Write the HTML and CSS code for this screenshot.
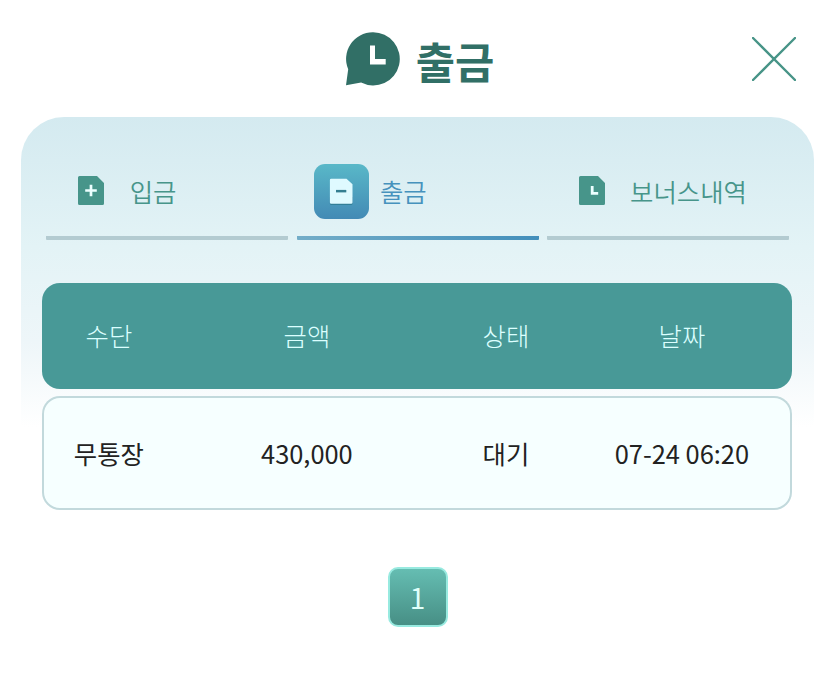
FILE: index.html
```html
<!DOCTYPE html>
<html lang="ko">
<head>
<meta charset="utf-8">
<title>출금</title>
<link rel="stylesheet" href="styles.css">
</head>
<body>
<header class="header">
  <div class="title">
    <svg class="title-icon" viewBox="0 0 54 54" aria-hidden="true"><path fill="#316f66" d="M26.800.3a26.600 26.600 0 1 1-11.700 50.300L0 53.200 2.200 37.300A26.600 26.600 0 0 1 26.800.3z"/><path fill="#fff" d="M24 13.500h5V27h10.700v5.500H24z"/></svg>
    <h1>출금</h1>
  </div>
  <button class="close" aria-label="닫기"><svg viewBox="0 0 44 44"><path d="M1 1l42 42M43 1L1 43" fill="none" stroke="#479487" stroke-width="2.4" stroke-linecap="round"/></svg></button>
</header>
<main class="panel">
  <nav class="tabs">
    <a class="tab"><span class="badge"><svg viewBox="0 0 26 29"><path fill="#47958a" d="M1.500 0H19l7 7v20.500a1.500 1.500 0 0 1-1.500 1.500h-23A1.500 1.500 0 0 1 0 27.500v-26A1.500 1.500 0 0 1 1.500 0z"/><path d="M13 8.700v11.600M7.200 14.500h11.600" fill="none" stroke="#ecffff" stroke-width="2.700"/></svg></span><span>입금</span></a>
    <a class="tab active"><span class="badge"><svg viewBox="0 0 26 29"><path fill="#327f98" d="M1.900 20h22.600v6.600q0 1.500-1.500 1.500H3.400q-1.500 0-1.500-1.500z"/><path fill="#dffaff" d="M3.200 1.800h15.300l6 5.500v18.200q0 1.300-1.300 1.300h-20q-1.300 0-1.300-1.300V3.100q0-1.300 1.300-1.300z"/><path fill="#347e91" d="M8 12.900h10.300v2.500H8z"/></svg></span><span>출금</span></a>
    <a class="tab"><span class="badge"><svg viewBox="0 0 26 29"><path fill="#47958a" d="M1.500 0H19l7 7v20.500a1.500 1.500 0 0 1-1.500 1.500h-23A1.500 1.500 0 0 1 0 27.500v-26A1.500 1.500 0 0 1 1.500 0z"/><path fill="#ecffff" d="M11.800 10h2.800v5.900h4.600v2.800h-7.400z"/></svg></span><span>보너스내역</span></a>
  </nav>
  <section class="table">
    <div class="row head"><span>수단</span><span>금액</span><span>상태</span><span>날짜</span></div>
    <div class="row entry"><span>무통장</span><span>430,000</span><span>대기</span><span class="date" lang="ja">07-24 06:20</span></div>
  </section>
  <div class="pager"><button class="page">1</button></div>
</main>
</body>
</html>
```
FILE: styles.css
```css
* { box-sizing: border-box; }
body {
  margin: 0;
  background: #fff;
  font-family: "Noto Sans CJK KR", "Noto Sans", sans-serif;
  font-size: 25.4px;
}
button { font: inherit; padding: 0; border: 0; background: none; }
.header {
  display: grid;
  grid-template-columns: 1fr auto 1fr;
  align-items: center;
  height: 117px;
  padding: 0 39px 0 44px;
}
.title { grid-column: 2; display: flex; align-items: center; gap: 16px; }
.title-icon { width: 54px; height: 54px; }
h1 { margin: 2px 0 0; color: #316f66; font-size: 42.7px; font-weight: 700; line-height: 60px; }
.close { justify-self: end; width: 44px; height: 44px; }
.close svg, .badge svg { display: block; }
.panel {
  height: 556px;
  margin: 0 21.4px;
  padding: 46.5px 21px 0;
  border-radius: 43px 43px 0 0;
  background: linear-gradient(#d4eaf0 0, #e3f3f6 130px, #eef6f9 225px, #fff 310px);
}
.tabs {
  display: grid;
  grid-template-columns: repeat(3, 242px);
  column-gap: 8.2px;
  padding-left: 4px;
}
.tab {
  display: flex;
  align-items: flex-start;
  gap: 10.8px;
  height: 76.5px;
  padding-left: 17px;
  border-bottom: 4px solid #b3cbd1;
  border-radius: 1px;
  color: #47958a;
  font-weight: 350;
  line-height: 55px;
}
.active {
  border: 0;
  color: #4692bd;
  background: linear-gradient(90deg, #73adc8, #438fbb) bottom / 100% 4px no-repeat;
}
.badge {
  display: grid;
  place-items: center;
  width: 55.5px;
  height: 55.5px;
  padding-bottom: 2px;
  border-radius: 11px;
}
.badge svg { width: 26px; height: 29px; }
.active .badge { padding: 0; background: linear-gradient(#59b8c8, #438ab5); }
.table { display: grid; gap: 6.5px; margin-top: 42.5px; width: 750px; }
.row {
  display: grid;
  grid-template-columns: 133px 263px 135px 217px;
  align-items: center;
  border-radius: 18px;
  text-align: center;
}
.head { height: 106.5px; padding-bottom: 2px; background: #489997; color: #dcffff; font-weight: 300; }
.entry {
  height: 114.5px;
  background: #f6ffff;
  color: #222;
  box-shadow: inset 0 0 0 2px #c2d9dc;
}
.date { font-family: "Noto Sans CJK JP", sans-serif; }
.pager { display: flex; justify-content: center; margin-top: 57px; }
.page {
  width: 60px;
  height: 60px;
  border: 2px solid #98eae0;
  border-radius: 10px;
  background: linear-gradient(#65bdb2, #478f85);
  color: #e0fffa;
  font-size: 28px;
}
```
